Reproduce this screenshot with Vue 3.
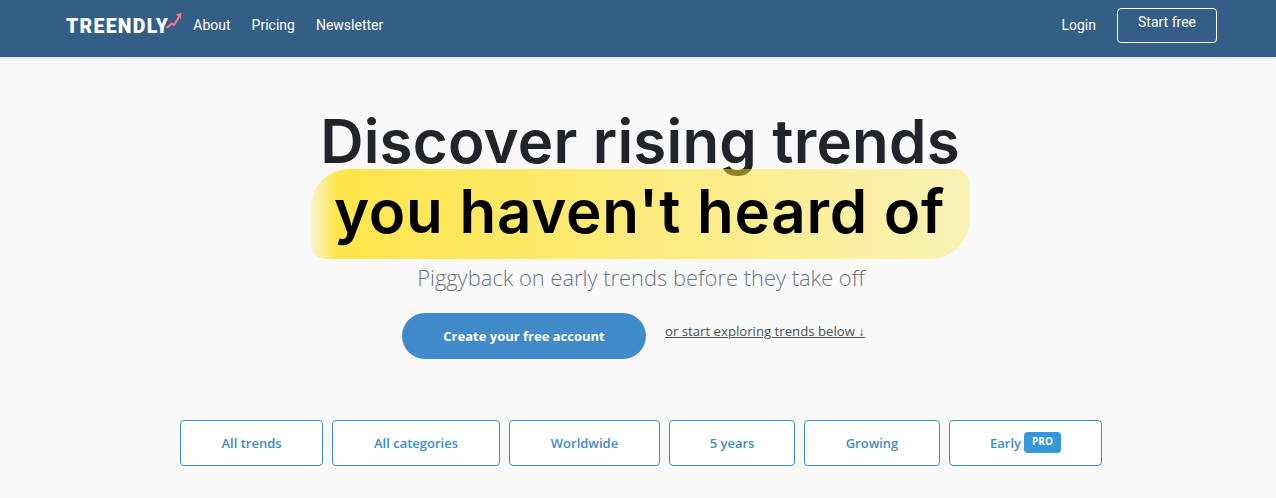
<template>
  <div class="page">
    <header class="nav">
      <a class="logo">TREENDLY<svg class="arrow" width="16" height="17" viewBox="0 0 16 17" fill="none"><path d="M0.5 16 L6 11.5 L8 13 L13.5 4" stroke="#fb7a80" stroke-width="2"/><path d="M10 2.5 L15.5 0.8 L15 7 Z" fill="#fb7a80"/></svg></a>
      <nav class="links">
        <a>About</a>
        <a>Pricing</a>
        <a>Newsletter</a>
      </nav>
      <div class="right">
        <a class="login">Login</a>
        <a class="start">Start free</a>
      </div>
    </header>

    <main class="hero">
      <h1>Discover rising trends<br><span class="mark">you haven't heard of</span></h1>
      <p class="sub">Piggyback on early trends before they take off</p>
      <div class="cta">
        <button class="create">Create your free account</button>
        <a class="explore">or start exploring trends below ↓</a>
      </div>
      <div class="filters">
        <button v-for="f in filters" :key="f.label" class="filter" :style="{ width: f.w + 'px' }">{{ f.label }}</button>
        <button class="filter early">Early<span class="pro">PRO</span></button>
      </div>
    </main>
  </div>
</template>

<script setup>
const filters = [
  { label: 'All trends', w: 143 },
  { label: 'All categories', w: 168 },
  { label: 'Worldwide', w: 151 },
  { label: '5 years', w: 126 },
  { label: 'Growing', w: 136 }
]
</script>

<style>
body { background: #f9f9f9; }
</style>

<style scoped>
.page { min-height: 498px; background: #f9f9f9; font-family: "Open Sans", sans-serif; overflow: hidden; }

.nav { height: 57px; background: #345e85; box-shadow: 0 1px 3px rgba(0,0,0,0.12); display: flex; align-items: center; padding: 0 59px 6px 66px; font-family: Roboto, sans-serif; color: #fff; box-sizing: border-box; }
.logo { position: relative; font-weight: 900; font-size: 19.5px; letter-spacing: 1.25px; margin-right: 24px; line-height: 1; padding-top: 2px; }
.arrow { position: absolute; left: 100px; top: -3px; }
.links { display: flex; gap: 21px; font-size: 14px; margin-bottom: 2px; }
.right { margin-left: auto; display: flex; align-items: center; gap: 21px; font-size: 14px; }
.login { margin-bottom: 2px; }
.start { width: 100px; height: 35px; box-sizing: border-box; border: 1px solid #fff; border-radius: 4px; text-align: center; line-height: 27px; }

.hero { display: flex; flex-direction: column; align-items: center; }
h1 { margin: 49px 0 0 4px; font-family: Inter, sans-serif; font-weight: 600; font-size: 60px; letter-spacing: 0.2px; line-height: 70px; color: #212529; text-align: center; }
.mark { color: #000; letter-spacing: 0.75px; padding: 5.7px 25px 11.7px 24px; border-radius: 40px 16px 40px 16px; background: linear-gradient(90deg, rgba(255,225,30,0.15) 0%, rgba(255,225,30,0.8) 4%, rgba(255,225,30,0.65) 35%, rgba(255,225,30,0.3) 100%); }
.sub { margin: 16px 0 0 6px; font-size: 21.9px; line-height: 32px; color: #6c757d; font-weight: 300; }
.cta { display: flex; align-items: flex-start; gap: 19px; margin-top: 19px; padding-right: 9px; }
.create { width: 244px; height: 46px; border: 0; border-radius: 23px; background: #418bca; color: #fff; font-family: inherit; font-weight: 700; font-size: 13px; }
.explore { margin-top: 8px; font-size: 13.2px; line-height: 20px; color: #495057; text-decoration: underline; }
.filters { display: flex; gap: 9px; margin-top: 61px; margin-left: 6px; }
.filter { height: 46px; padding: 0; justify-content: center; background: #fff; border: 1px solid #3d8bcd; border-radius: 4px; color: #3d8bcd; font-family: inherit; font-weight: 600; font-size: 13px; display: flex; align-items: center; gap: 3px; white-space: pre; }
.early { width: 153px; }
.pro { background: #3498db; color: #fff; font-size: 10px; font-weight: 700; border-radius: 4px; padding: 0 8px; height: 21px; line-height: 19px; margin-top: -2px; }
</style>
